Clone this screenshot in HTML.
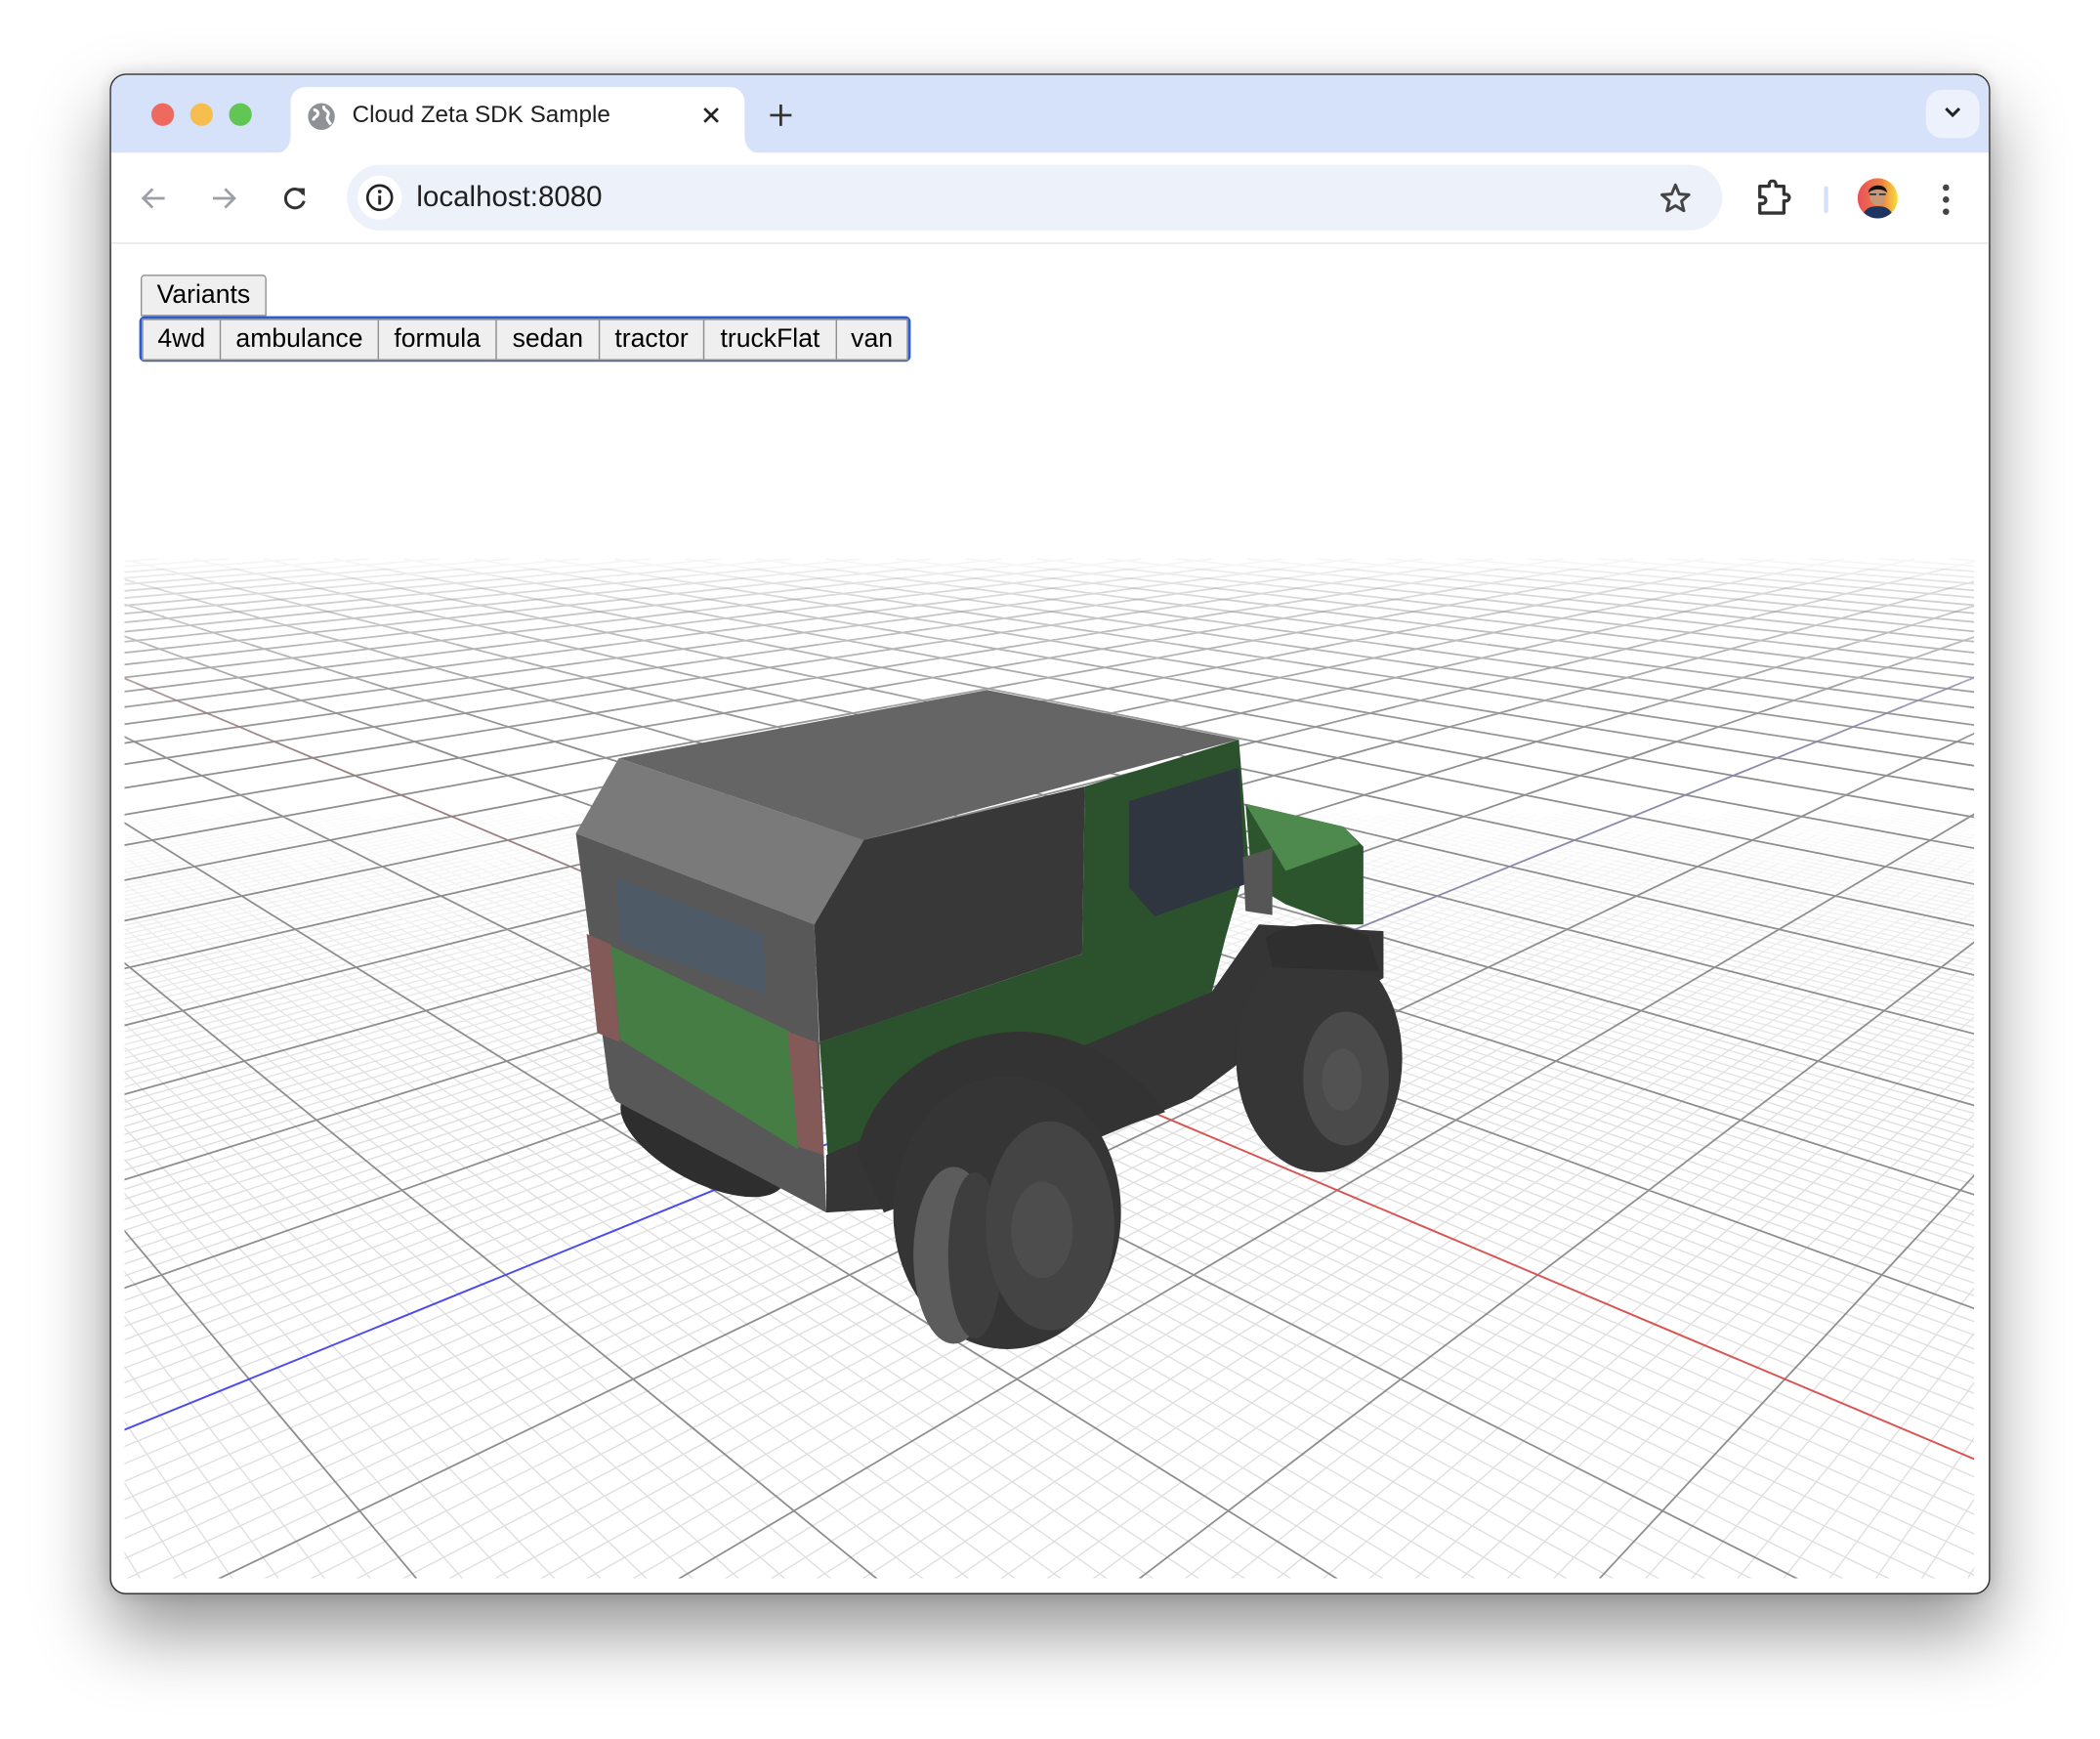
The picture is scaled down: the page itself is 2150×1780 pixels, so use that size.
<!DOCTYPE html>
<html><head><meta charset="utf-8"><style>
*{margin:0;padding:0;box-sizing:border-box}
html,body{width:2150px;height:1780px;overflow:hidden;background:#fff}
#wrap{position:absolute;left:0;top:0;width:1568px;height:1298px;transform:scale(1.37117,1.37134);transform-origin:0 0;font-family:"Liberation Sans",Arial,sans-serif;overflow:hidden}
#win{position:absolute;left:82px;top:55px;width:1404px;height:1135px;border-radius:12px;background:#fff;overflow:hidden;border:1px solid #2a2a2a;box-shadow:0 28px 55px rgba(0,0,0,.42),0 0 12px rgba(0,0,0,.15)}
#tabbar{position:absolute;left:0;top:0;width:100%;height:58px;background:#d6e2f9}
.tl{position:absolute;top:21px;width:17px;height:17px;border-radius:50%}
#tab{position:absolute;left:134px;top:9px;width:339px;height:50px;background:#fff;border-radius:11px 11px 0 0}
#tab:before,#tab:after{content:"";position:absolute;bottom:0;width:12px;height:12px}
#tab:before{left:-12px;background:radial-gradient(circle at 0 0,transparent 11.5px,#fff 12px)}
#tab:after{right:-12px;background:radial-gradient(circle at 100% 0,transparent 11.5px,#fff 12px)}
#toolbar{position:absolute;left:0;top:58px;width:100%;height:68px;background:#fff;border-bottom:1px solid #e1e3e6}
#omni{position:absolute;left:176px;top:9px;width:1027px;height:49px;background:#ecf1fa;border-radius:25px}
.btn{position:absolute;height:31px;background:#efefef;border:1px solid #8f8f8f;font-size:19.4px;color:#000;text-align:center;line-height:29px}
</style></head><body>
<div id="wrap">
<div id="win">
 <div id="tabbar">
  <div class="tl" style="left:30px;background:#ee6a5f"></div>
  <div class="tl" style="left:59px;background:#f5be4f"></div>
  <div class="tl" style="left:88px;background:#62c655"></div>
  <div id="tab">
   <svg style="position:absolute;left:12px;top:11px" width="22" height="22" viewBox="0 0 22 22"><circle cx="11" cy="11" r="10" fill="#8e9297"/><path d="M5 6c3 0 4 2 3 4s-3 1-3 4M13 3c-1 3 2 3 3 5s-2 3 0 6 2 3 2 3" stroke="#fff" stroke-width="2.2" fill="none"/></svg>
   <div style="position:absolute;left:46px;top:10px;font-size:17.7px;color:#1f1f1f">Cloud Zeta SDK Sample</div>
   <svg style="position:absolute;left:307px;top:14px" width="14" height="14" viewBox="0 0 14 14"><path d="M2 2L12 12M12 2L2 12" stroke="#222" stroke-width="2"/></svg>
  </div>
  <svg style="position:absolute;left:491px;top:21px" width="18" height="18" viewBox="0 0 18 18"><path d="M9 1V17M1 9H17" stroke="#333" stroke-width="2"/></svg>
  <div style="position:absolute;left:1355px;top:11px;width:40px;height:36px;background:#ecf1fb;border-radius:12px"></div>
  <svg style="position:absolute;left:1367px;top:22px" width="16" height="12" viewBox="0 0 16 12"><path d="M3 3L8 8L13 3" stroke="#222" stroke-width="2.2" fill="none"/></svg>
 </div>
 <div id="toolbar">
  <svg style="position:absolute;left:20px;top:22px" width="24" height="24" viewBox="0 0 24 24"><path d="M20 12H5M11 5L4 12L11 19" stroke="#9aa0a6" stroke-width="2" fill="none"/></svg>
  <svg style="position:absolute;left:72px;top:22px" width="24" height="24" viewBox="0 0 24 24"><path d="M4 12H19M13 5L20 12L13 19" stroke="#9aa0a6" stroke-width="2" fill="none"/></svg>
  <svg style="position:absolute;left:125px;top:22px" width="24" height="24" viewBox="0 0 24 24"><path d="M18.5 9A7 7 0 1 0 19 14" stroke="#333" stroke-width="2.2" fill="none"/><path d="M13.5 4.5H19.5V10.5Z" fill="#333"/></svg>
  <div id="omni">
   <div style="position:absolute;left:8px;top:8px;width:33px;height:33px;border-radius:50%;background:#fff"></div>
   <svg style="position:absolute;left:13px;top:13px" width="23" height="23" viewBox="0 0 24 24"><circle cx="12" cy="12" r="9.5" stroke="#222" stroke-width="2" fill="none"/><path d="M12 10.5V17.5" stroke="#222" stroke-width="2.2"/><circle cx="12" cy="7.3" r="1.4" fill="#222"/></svg>
   <div style="position:absolute;left:52px;top:12px;font-size:21.5px;color:#1f1f1f">localhost:8080</div>
   <svg style="position:absolute;left:979px;top:12px" width="26" height="26" viewBox="0 0 24 24"><path d="M12 2.8L14.6 9.1L21.3 9.6L16.2 14L17.8 20.6L12 17.1L6.2 20.6L7.8 14L2.7 9.6L9.4 9.1Z" stroke="#444" stroke-width="2" fill="none" stroke-linejoin="round"/></svg>
  </div>
  <svg style="position:absolute;left:1227px;top:20px" width="28" height="28" viewBox="0 0 28 28"><path d="M4 5H11V3.5A2.5 2.5 0 0 1 16 3.5V5H22V11H23.5A2.5 2.5 0 0 1 23.5 16H22V25H4V18H6A2.5 2.5 0 0 0 6 13H4Z" stroke="#333" stroke-width="2.4" fill="none" stroke-linejoin="round"/></svg>
  <div style="position:absolute;left:1279px;top:25px;width:3px;height:20px;background:#d3e0fb;border-radius:2px"></div>
  <svg style="position:absolute;left:1304px;top:19px" width="30" height="30" viewBox="0 0 30 30"><defs><linearGradient id="av" x1="0" x2="1"><stop offset="0" stop-color="#e8505b"/><stop offset=".6" stop-color="#f08040"/><stop offset="1" stop-color="#f5e040"/></linearGradient><clipPath id="avc"><circle cx="15" cy="15" r="15"/></clipPath></defs><circle cx="15" cy="15" r="15" fill="url(#av)"/><g clip-path="url(#avc)"><path d="M3 30C5 22 10 21 15 21S25 22 27 30Z" fill="#1d3560"/><ellipse cx="15" cy="13" rx="6" ry="7.5" fill="#c99878"/><path d="M8 11C8 4 22 3 22 11C20 8 12 7 8 11Z" fill="#111"/><path d="M9 12H14M16 12H21" stroke="#333" stroke-width="1.3"/></g></svg>
  <svg style="position:absolute;left:1364px;top:22px" width="12" height="26" viewBox="0 0 12 26"><circle cx="6" cy="4" r="2.4" fill="#444"/><circle cx="6" cy="13" r="2.4" fill="#444"/><circle cx="6" cy="22" r="2.4" fill="#444"/></svg>
 </div>
</div>
<svg id="scene" style="position:absolute;left:0;top:0" width="1568" height="1298" viewBox="0 0 1568 1298">
 <defs><clipPath id="cv"><rect x="93" y="182" width="1381" height="996"/></clipPath></defs>
 <g id="grid" clip-path="url(#cv)"></g>
 <g id="car">
  <ellipse cx="525" cy="852" rx="68" ry="30" transform="rotate(28 525 852)" fill="#2e2e2e"/>
  <polygon points="462,566 737,515 925,552 645,627" fill="#656565"/>
  <polygon points="430,622 462,566 645,627 608,690" fill="#7a7a7a"/>
  <polygon points="430,622 608,690 617,905 460,822 455,812" fill="#585858"/>
  <polygon points="460,655 570,697 572,742 463,703" fill="#4e5a66"/>
  <polygon points="456,706 590,770 596,858 463,776" fill="#467d45"/>
  <polygon points="438,697 456,705 463,778 446,771" fill="#845a58"/>
  <polygon points="588,770 610,778 615,862 596,856" fill="#845a58"/>
  <polygon points="608,690 645,627 810,587 808,712 612,778" fill="#383838"/>
  <polygon points="612,778 808,712 810,587 925,552 932,640 915,700 905,740 640,860 618,862" fill="#2b522c"/>
  <polygon points="843,598 925,573 930,660 862,684 843,662" fill="#2f3640"/>
  <polygon points="930,600 1003,617 1018,632 1018,690 1000,690 960,675 935,660" fill="#2c552d"/>
  <polygon points="930,600 1003,617 1015,630 960,650" fill="#4e8a4e"/>
  <polygon points="617,862 905,740 940,690 1033,695 1033,730 950,775 890,820 700,900 617,905" fill="#353535"/>
  <path d="M640 860C650 810 700 772 760 770C810 770 850 800 870 830L660 905Z" fill="#333"/>
  <ellipse cx="985" cy="790" rx="62" ry="85" fill="#363636"/>
  <ellipse cx="1005" cy="805" rx="32" ry="50" fill="#4a4a4a"/>
  <ellipse cx="1002" cy="806" rx="15" ry="23" fill="#525252"/>
  <path d="M945 700C965 685 1010 688 1022 700L1030 725L950 722Z" fill="#2f2f2f"/>
  <polygon points="928,640 950,633 950,683 930,680" fill="#565656"/>
  <ellipse cx="752" cy="905" rx="85" ry="102" fill="#353535"/>
  <ellipse cx="712" cy="937" rx="30" ry="66" fill="#5c5c5c"/>
  <ellipse cx="728" cy="937" rx="20" ry="62" fill="#3e3e3e"/>
  <ellipse cx="784" cy="915" rx="48" ry="78" fill="#444"/>
  <ellipse cx="778" cy="918" rx="23" ry="36" fill="#4d4d4d"/>
 </g>
</svg>
<div class="btn" style="left:105px;top:205px;width:94px;border-radius:3px 3px 0 0">Variants</div>
<div style="position:absolute;left:104px;top:236px;width:576px;height:34px;border:2.5px solid #2b5bd0;border-radius:4px;background:#efefef"></div>
<div class="btn" style="left:106px;top:238px;width:59px">4wd</div>
<div class="btn" style="left:164px;top:238px;width:119px">ambulance</div>
<div class="btn" style="left:282px;top:238px;width:89px">formula</div>
<div class="btn" style="left:370px;top:238px;width:78px">sedan</div>
<div class="btn" style="left:447px;top:238px;width:79px">tractor</div>
<div class="btn" style="left:525px;top:238px;width:100px">truckFlat</div>
<div class="btn" style="left:624px;top:238px;width:54px">van</div>
</div>
<script>
(function(){
var V1=[-443.5,280],V2=[2029.5,280],O=[770,792],a=0.0792;
function P(u,v){var w=1-a*u-a*v;return [(-a*u*V1[0]-a*v*V2[0]+O[0])/w,(-a*u*V1[1]-a*v*V2[1]+O[1])/w,w];}
var bins={};
function add(key,color,width,op,d){var k=key+'|'+color+'|'+width+'|'+op;if(!bins[k])bins[k]={c:color,w:width,o:op,d:[]};bins[k].d.push(d);}
function line(fixed,isU,t0,t1,step,color,width,base,fs,fe,key){
 var tmax=(0.95/a)-fixed; if(t1>tmax)t1=tmax;
 for(var t=t0;t<t1;t+=step){var t2=Math.min(t+step,t1);
  var p=isU?P(fixed,t):P(t,fixed),q=isU?P(fixed,t2):P(t2,fixed);
  var w=(p[2]+q[2])/2;var f=(fe-w)/(fe-fs);if(f>1)f=1;if(f<=0)continue;
  var op=Math.round(base*f*12)/12;if(op<=0)continue;
  add(key,color,width,op.toFixed(3),'M'+p[0].toFixed(1)+' '+p[1].toFixed(1)+'L'+q[0].toFixed(1)+' '+q[1].toFixed(1));}
}
var N=-30,M=13;
for(var i=-100;i<=130;i++){if(i%10===0)continue;var c=i/10;
 line(c,true,-10,M,0.5,'#d4d4d4',1,0.75,0.9,1.6,'a');
 line(c,false,-10,M,0.5,'#d4d4d4',1,0.75,0.9,1.6,'a');}
for(var j=N;j<=M;j++){if(j===0)continue;
 line(j,true,N,M,0.5,'#8e8e8e',1.3,1,1.8,3.8,'b');
 line(j,false,N,M,0.5,'#8e8e8e',1.3,1,1.8,3.8,'b');}
line(0,false,0,M,0.5,'#d9534f',1.4,1,1.8,3.8,'c');
line(0,false,N,0,0.5,'#9a8282',1.3,1,1.8,3.8,'c');
line(0,true,0,M,0.5,'#4a4af0',1.4,1,1.8,3.8,'c');
line(0,true,N,0,0.5,'#8a8aaa',1.3,1,1.8,3.8,'c');
var g=document.getElementById('grid'),ns='http://www.w3.org/2000/svg';
Object.keys(bins).sort().forEach(function(k){var b=bins[k];var p=document.createElementNS(ns,'path');
 p.setAttribute('d',b.d.join(''));p.setAttribute('stroke',b.c);p.setAttribute('stroke-width',b.w);
 p.setAttribute('stroke-opacity',b.o);p.setAttribute('fill','none');g.appendChild(p);});
})();
</script>
</body></html>
